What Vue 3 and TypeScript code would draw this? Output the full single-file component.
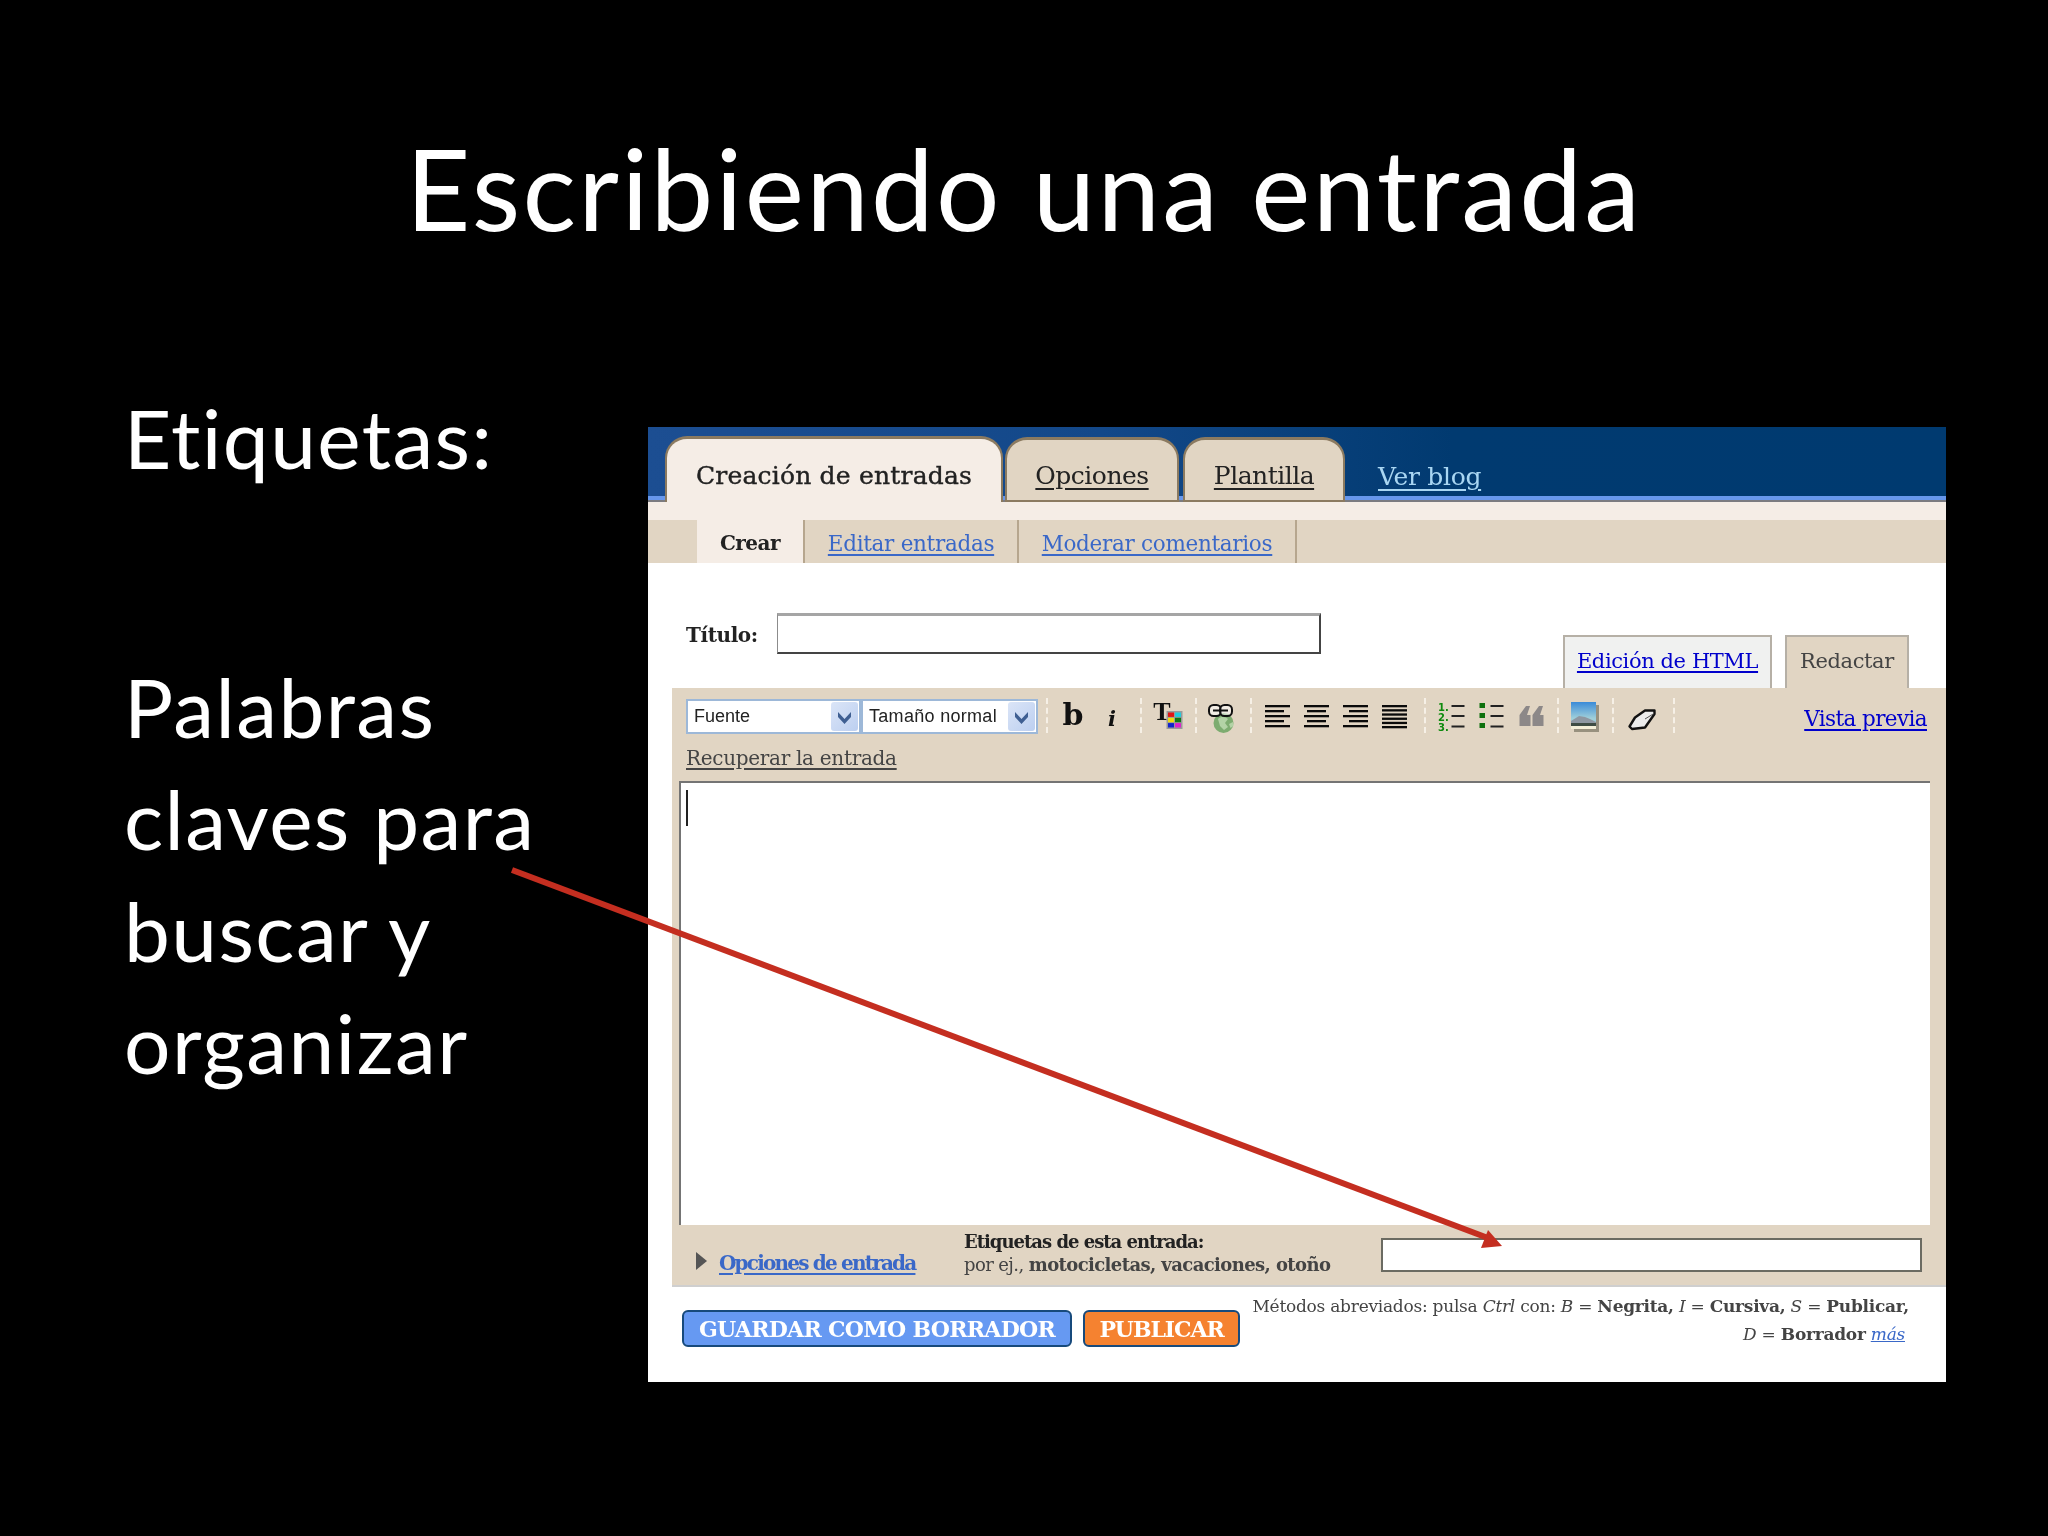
<script setup lang="ts">
const longShort = (shift: number) =>
  [25, 19, 25, 19, 25].map((w, i) => ({ y: 7 + i * 5, w, x: w === 25 ? 0 : shift }))
const alignRows = [
  longShort(0),
  longShort(3),
  longShort(6),
  [25, 25, 25, 25, 25, 25].map((w, i) => ({ y: 7 + i * 4.2, w, x: 0 })),
]
const swatches = ['#e01515', '#22ccdd', '#eedd11', '#117711', '#1122cc', '#dd22cc']
</script>

<template>
  <div class="slide">
    <h1 class="title">Escribiendo una entrada</h1>
    <div class="content">
      <div class="side">
        <p class="lead">Etiquetas:</p>
        <p class="desc">Palabras<br />claves para<br />buscar y<br />organizar</p>
      </div>
      <section class="panel">
        <header class="topbar">
          <span class="tab active">Creación de entradas</span>
          <span class="tab t2"><u>Opciones</u></span>
          <span class="tab t3"><u>Plantilla</u></span>
          <a class="viewblog">Ver blog</a>
        </header>
        <div class="strip"></div>
        <nav class="subnav">
          <span class="sub crear">Crear</span>
          <span class="sub s2"><a>Editar entradas</a></span>
          <span class="sub s3"><a>Moderar comentarios</a></span>
        </nav>
        <div class="title-row">
          <div class="title-field">
            <label>Título:</label>
            <div class="title-input"></div>
          </div>
          <div class="mode-tabs">
            <span class="mode html"><a>Edición de HTML</a></span>
            <span class="mode compose">Redactar</span>
          </div>
        </div>
        <div class="editor-wrap">
          <div class="toolbar">
            <div class="selects">
              <div class="sel s-font"><span>Fuente</span><i class="drop"><svg viewBox="0 0 27 27"><path d="M7 9l6.5 7L20 9v5l-6.5 7L7 14z" fill="#3f5f92" /></svg></i></div>
              <div class="sel s-size"><span>Tamaño normal</span><i class="drop"><svg viewBox="0 0 27 27"><path d="M7 9l6.5 7L20 9v5l-6.5 7L7 14z" fill="#3f5f92" /></svg></i></div>
            </div>
            <div class="icons">
              <i class="sep"></i>
              <div class="grp w92">
                <svg class="ic" viewBox="0 0 39 36"><text x="19" y="27" class="t-b">b</text></svg>
                <svg class="ic" viewBox="0 0 39 36"><text x="19" y="28" class="t-i">i</text></svg>
              </div>
              <i class="sep"></i>
              <div class="grp w53">
                <svg class="ic" viewBox="0 0 39 36">
                  <text x="14" y="22" class="t-t">T</text>
                  <rect x="18.500" y="13" width="16" height="18" fill="#9a9a9a" />
                  <rect v-for="(c, i) in swatches" :key="c" :x="20 + (i % 2) * 7" :y="14.5 + Math.floor(i / 2) * 5.3" width="6" height="4.4" :fill="c" />
                </svg>
              </div>
              <i class="sep"></i>
              <div class="grp w53">
                <svg class="ic" viewBox="0 0 39 36">
                  <circle cx="20.500" cy="25" r="10" fill="#7dac70" />
                  <path d="M15 21c3-3 8-2 10 0l-3 4 3 4-4 3-4-4zM26 26l4-2 .5 4-3 2z" fill="#b3d3a6" />
                  <g fill="#fff" fill-opacity=".55" stroke="#111" stroke-width="2">
                    <rect x="6" y="7" width="12" height="11" rx="4.500" />
                    <rect x="17" y="7" width="12" height="11" rx="4.500" />
                  </g>
                  <path d="M10 12.500h15" stroke="#111" stroke-width="2" />
                </svg>
              </div>
              <i class="sep"></i>
              <div class="grp w172">
                <svg v-for="(rows, k) in alignRows" :key="k" class="ic" viewBox="0 0 39 36">
                  <rect v-for="(r, j) in rows" :key="j" :x="7 + r.x" :y="r.y" :width="r.w" height="2.300" fill="#0a0a0a" />
                </svg>
              </div>
              <i class="sep"></i>
              <div class="grp w131 g1">
                <svg class="ic" viewBox="0 0 39 36">
                  <text x="6" y="12.500" class="t-n">1.</text>
                  <text x="6" y="22.500" class="t-n">2.</text>
                  <text x="6" y="33" class="t-n">3.</text>
                  <path d="M19.500 8h13M19.500 18h13M19.500 28.500h13" stroke="#222" stroke-width="2" />
                </svg>
                <svg class="ic" viewBox="0 0 39 36">
                  <rect x="7.500" y="5" width="5.500" height="5" fill="#0e700e" />
                  <rect x="7.500" y="15" width="5.500" height="5" fill="#0e700e" />
                  <rect x="7.500" y="25" width="5.500" height="5" fill="#0e700e" />
                  <path d="M18.500 8h13M18.500 18h13M18.500 28.500h13" stroke="#222" stroke-width="2" />
                </svg>
                <svg class="ic" viewBox="0 0 39 36">
                  <path d="M7.500 28V17L14 8h4l-3 9h3.500v11zM20.500 28V17L27 8h4l-3 9h3.500v11z" fill="#8c8888" />
                </svg>
              </div>
              <i class="sep"></i>
              <div class="grp w53">
                <svg class="ic" viewBox="0 0 39 36">
                  <defs>
                    <linearGradient id="sky" x1="0" y1="0" x2="0" y2="1">
                      <stop offset="0" stop-color="#3a8bd8" />
                      <stop offset=".6" stop-color="#9fcfda" />
                    </linearGradient>
                  </defs>
                  <rect x="9" y="7" width="25" height="27" fill="#86806e" opacity=".8" />
                  <rect x="6" y="4" width="25" height="27" fill="url(#sky)" />
                  <path d="M6 23l8-5 6 1 5 2 6 3v4H6z" fill="#8f98a2" />
                  <path d="M6 25h25v3H6z" fill="#3f4d44" />
                  <rect x="6" y="28" width="25" height="3" fill="#f4efd8" />
                </svg>
              </div>
              <i class="sep"></i>
              <div class="grp w59">
                <svg class="ic" viewBox="0 0 39 36">
                  <path d="M7.500 28.500L13 19.500 23 12.500h9.500v3.500L23 29.500l-13 1.500z" fill="#ececec" stroke="#111" stroke-width="2.400" stroke-linejoin="round" />
                  <path d="M23 21l9-5.500" fill="none" stroke="#555" stroke-width="1" />
                </svg>
              </div>
              <i class="sep"></i>
            </div>
            <a class="preview">Vista previa</a>
            <a class="recover">Recuperar la entrada</a>
          </div>
          <div class="editor"><i class="caret"></i></div>
          <div class="meta">
            <i class="tri"></i>
            <a class="options">Opciones de entrada</a>
            <div class="labels-hint">
              <b>Etiquetas de esta entrada:</b>
              <span>por ej., <b>motocicletas, vacaciones, otoño</b></span>
            </div>
            <div class="labels-input"></div>
          </div>
        </div>
        <div class="actions">
          <div class="btns">
            <span class="btn blue">GUARDAR COMO BORRADOR</span>
            <span class="btn orange">PUBLICAR</span>
          </div>
          <p class="shortcuts">
            Métodos abreviados: pulsa <em>Ctrl</em> con: <em>B</em> = <b>Negrita,</b> <em>I</em> = <b>Cursiva,</b> <em>S</em> = <b>Publicar,</b><br />
            <em>D</em> = <b>Borrador</b> <a><em>más</em></a>
          </p>
        </div>
      </section>
    </div>
    <svg class="arrow" viewBox="0 0 2048 1536">
      <path d="M512 870L1488 1238" stroke="#c42e20" stroke-width="6" fill="none" />
      <path d="M1502 1246L1481 1248L1488 1230z" fill="#c42e20" />
    </svg>
  </div>
</template>

<style>
html, body { margin: 0; background: #000; }
</style>

<style scoped>
.slide {
  position: relative;
  width: 2048px;
  height: 1536px;
  background: #000;
  overflow: hidden;
  color: #fff;
  font-family: Lato, "Open Sans", sans-serif;
  font-variant-ligatures: none;
}
.title {
  margin: 0;
  height: 427px;
  padding-top: 113px;
  box-sizing: border-box;
  text-align: center;
  font-size: 112px;
  line-height: 150px;
  font-weight: 400;
  letter-spacing: 2.300px;
}
.content { display: flex; }
.side {
  width: 648px;
  flex: none;
  box-sizing: border-box;
  padding: 0 0 0 124px;
  font-size: 82px;
  line-height: 112px;
  letter-spacing: 1.4px;
}
.lead { margin: -46px 0 0; }
.desc { margin: 157px 0 0; }

.panel {
  flex: none;
  width: 1298px;
  height: 955px;
  background: #fff;
  color: #333;
  font-family: "DejaVu Serif", "Liberation Serif", serif;
  filter: blur(0.7px);
  overflow: hidden;
}
.panel a { cursor: pointer; }
.topbar {
  height: 69px;
  background: linear-gradient(90deg, #1c4e92 0, #134889 35%, #013a70 62%, #003a70 100%);
  border-bottom: 4px solid #6797ec;
  display: flex;
  align-items: flex-end;
  padding-left: 17px;
  position: relative;
}
.topbar::after {
  content: "";
  position: absolute;
  left: 0;
  right: 0;
  bottom: -6px;
  height: 2px;
  background: #7b7b80;
}
.tab {
  box-sizing: border-box;
  height: 65px;
  margin-bottom: -6px;
  position: relative;
  z-index: 1;
  border: 2px solid #8b7a60;
  border-top-width: 3px;
  border-radius: 22px 22px 0 0;
  background: #e1d5c3;
  font-size: 25px;
  display: flex;
  align-items: center;
  justify-content: center;
  padding-top: 10px;
  color: #222;
  letter-spacing: -0.5px;
}
.tab u { text-underline-offset: 4px; text-decoration-thickness: 2px; }
.tab.active {
  width: 338px;
  background: #f5ede6;
  border-bottom: 0;
  height: 66px;
  padding-top: 9px;
  letter-spacing: 0.2px;
  -webkit-text-stroke: 0.4px #222;
  margin-right: 2px;
}
.t2 { width: 174px; margin-right: 4px; }
.t3 { width: 162px; }
.viewblog {
  margin: 0 0 4px 33px;
  font-size: 25px;
  letter-spacing: -0.3px;
  line-height: 30px;
  color: #a9d6f2;
  text-decoration: underline;
  text-underline-offset: 4px;
  text-decoration-thickness: 2px;
}
.strip { height: 20px; background: #f5ede6; }
.subnav {
  height: 43px;
  background: #e1d5c3;
  display: flex;
  padding-left: 49px;
  font-size: 21.500px;
  letter-spacing: -0.3px;
}
.sub {
  box-sizing: border-box;
  display: flex;
  align-items: center;
  justify-content: center;
  padding-top: 3px;
  border-right: 2px solid #b6a68e;
}
.sub a {
  color: #3a68c8;
  text-decoration: underline;
  text-underline-offset: 3px;
  text-decoration-thickness: 2px;
}
.crear { width: 108px; background: #f5ede6; color: #222; font-weight: 700; font-size: 20px; letter-spacing: -0.5px; }
.s2 { width: 214px; }
.s3 { width: 278px; }

.title-row {
  height: 125px;
  display: flex;
  align-items: flex-end;
  padding: 0 37px 0 38px;
}
.title-field {
  display: flex;
  align-items: center;
  margin-bottom: 34px;
}
.title-field label {
  width: 91px;
  padding-top: 2px;
  font-size: 20px;
  font-weight: 700;
  letter-spacing: -0.4px;
  color: #222;
}
.title-input {
  box-sizing: border-box;
  width: 544px;
  height: 41px;
  border: 2px solid #444;
  border-top: 3px solid #a5a5a5;
  border-left: 1px solid #8c8c8c;
}
.mode-tabs { margin-left: auto; display: flex; gap: 13px; }
.mode {
  box-sizing: border-box;
  height: 53px;
  border: 2px solid #b6b0a6;
  border-bottom: 0;
  display: flex;
  align-items: center;
  justify-content: center;
  padding-bottom: 3px;
  font-size: 21px;
  letter-spacing: -0.4px;
}
.html { width: 209px; background: #f0f1f0; }
.html a, .preview {
  color: #0000cc;
  text-decoration: underline;
  text-underline-offset: 3px;
  text-decoration-thickness: 2px;
}
.compose { width: 124px; background: #e1d5c3; color: #444; }

.editor-wrap {
  margin-left: 24px;
  height: 599px;
  background: #e1d5c3;
  box-sizing: border-box;
  border-bottom: 2px solid #cfcfcf;
}
.toolbar {
  height: 93px;
  display: grid;
  grid-template-columns: auto auto 1fr;
  grid-template-rows: 44px 1fr;
  padding: 11px 19px 0 14px;
  box-sizing: border-box;
}
.selects { display: flex; width: 352px; height: 35px; }
.sel {
  box-sizing: border-box;
  height: 35px;
  border: 2px solid #9db8d8;
  background: #fff;
  display: flex;
  align-items: center;
  justify-content: space-between;
  padding: 0 0 0 6px;
  font-family: "Liberation Sans", sans-serif;
  font-size: 18px;
  color: #222;
}
.s-font { width: 175px; }
.s-size { width: 177px; letter-spacing: 0.3px; }
.drop {
  width: 27px;
  height: 29px;
  margin-right: 1px;
  background: linear-gradient(135deg, #dbe5f7, #bccff0);
  border-radius: 3px;
}
.drop svg { display: block; width: 27px; height: 29px; }
.icons { display: flex; margin: -1px 0 0 8px; height: 35px; }
.sep {
  width: 0;
  height: 35px;
  border-left: 2px dashed #f6f0e6;
  flex: none;
}
.grp { display: flex; flex: none; box-sizing: border-box; padding-left: 5.500px; }
.w92 { width: 92px; }
.w53 { width: 53px; }
.w172 { width: 172px; }
.w131 { width: 131px; }
.w59 { width: 59px; padding-left: 7.500px; }
.g1 { gap: 1px; }
.ic { width: 39px; height: 36px; flex: none; display: block; overflow: visible; }
.t-b { font: 700 30px "DejaVu Serif", serif; text-anchor: middle; fill: #111; }
.t-i { font: italic 700 21px "DejaVu Serif", serif; text-anchor: middle; fill: #111; }
.t-t { font: 700 26px "Liberation Serif", serif; text-anchor: middle; fill: #111; }
.t-n { font: 700 10px "DejaVu Sans", sans-serif; fill: #0e8a0e; }
.preview {
  justify-self: end;
  font-size: 21.500px;
  letter-spacing: -0.6px;
  line-height: 35px;
  height: 35px;
  margin-top: 2px;
}
.recover {
  grid-column: 1 / 4;
  grid-row: 2;
  font-size: 20px;
  letter-spacing: -0.3px;
  line-height: 30px;
  color: #444;
  text-decoration: underline;
  text-underline-offset: 3px;
  text-decoration-thickness: 2px;
}
.editor {
  box-sizing: border-box;
  height: 444px;
  margin: 0 16px 0 7px;
  background: #fff;
  border-top: 2px solid #747474;
  border-left: 2px solid #747474;
  padding: 7px 0 0 5px;
}
.caret { display: block; width: 2px; height: 36px; background: #222; }
.meta {
  height: 60px;
  display: flex;
  align-items: flex-start;
}
.tri {
  width: 0;
  height: 0;
  margin: 27px 0 0 24px;
  border-left: 11px solid #555;
  border-top: 9px solid transparent;
  border-bottom: 9px solid transparent;
}
.options {
  margin: 24px 0 0 12px;
  width: 245px;
  font-size: 20px;
  font-weight: 700;
  letter-spacing: -1.800px;
  line-height: 28px;
  color: #3a68c8;
  text-decoration: underline;
  text-underline-offset: 3px;
  text-decoration-thickness: 2px;
}
.labels-hint {
  display: flex;
  flex-direction: column;
  margin-top: 5px;
  width: 417px;
  font-size: 18px;
  line-height: 23px;
  letter-spacing: -0.6px;
  color: #444;
}
.labels-hint > b { color: #222; letter-spacing: -1px; }
.labels-input {
  box-sizing: border-box;
  width: 541px;
  height: 34px;
  margin-top: 13px;
  background: #fff;
  border: 2px solid #6b6b62;
}
.actions { display: flex; padding: 0 37px 0 34px; }
.btns { display: flex; gap: 11px; padding-top: 23px; flex: none; }
.btn {
  box-sizing: border-box;
  height: 37px;
  border: 2px solid #174a7c;
  border-radius: 6px;
  color: #fff;
  font-weight: 700;
  font-size: 22px;
  display: flex;
  align-items: center;
  justify-content: center;
  letter-spacing: -0.7px;
}
.blue { width: 390px; background: #6699f2; }
.orange { width: 157px; background: #f58230; letter-spacing: -1.1px; }
.shortcuts {
  margin: 5px 0 0;
  flex: 1;
  text-align: right;
  font-size: 17px;
  line-height: 28px;
  letter-spacing: -0.25px;
  color: #444;
  white-space: nowrap;
}
.shortcuts a { color: #3a68c8; text-decoration: underline; margin-right: 4px; }
.arrow {
  position: absolute;
  inset: 0;
  width: 2048px;
  height: 1536px;
  pointer-events: none;
}
</style>
